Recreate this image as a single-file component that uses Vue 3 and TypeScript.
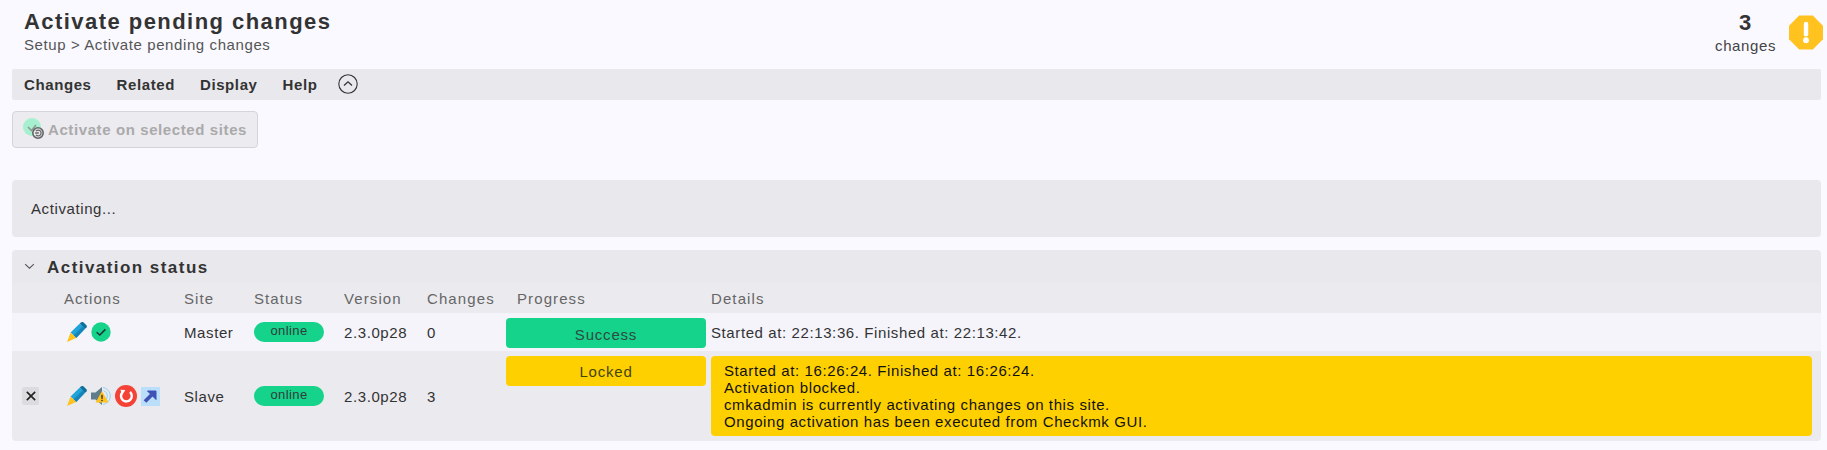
<script setup lang="ts">
interface SiteRow {
  name: string;
  version: string;
  changes: number;
  progress: string;
  kind: "ok" | "locked";
}

const menus = ["Changes", "Related", "Display", "Help"];
const headers = ["", "Actions", "Site", "Status", "Version", "Changes", "Progress", "Details"];

const sites: SiteRow[] = [
  { name: "Master", version: "2.3.0p28", changes: 0, progress: "Success", kind: "ok" },
  { name: "Slave", version: "2.3.0p28", changes: 3, progress: "Locked", kind: "locked" },
];

const lockedDetails = [
  "Started at: 16:26:24. Finished at: 16:26:24.",
  "Activation blocked.",
  "cmkadmin is currently activating changes on this site.",
  "Ongoing activation has been executed from Checkmk GUI.",
];
</script>

<template>
  <div class="page">
    <header class="top">
      <div>
        <h1>Activate pending changes</h1>
        <div class="crumb">Setup &gt; Activate pending changes</div>
      </div>
      <div class="pending">
        <div class="count">
          <b>3</b>
          <span>changes</span>
        </div>
        <svg class="octagon" viewBox="0 0 35 35" width="34" height="35">
          <polygon points="10.5,0 24.5,0 35,10.5 35,24.5 24.5,35 10.5,35 0,24.5 0,10.5" fill="#ffc21f" />
          <rect x="15.2" y="6.5" width="4.6" height="15" rx="2.3" fill="#fff" />
          <circle cx="17.5" cy="25.5" r="3" fill="#fff" />
        </svg>
      </div>
    </header>

    <nav class="menubar">
      <span v-for="m in menus" :key="m" class="menu">{{ m }}</span>
      <svg viewBox="0 0 20 20" width="20" height="20">
        <circle cx="10" cy="10" r="9.2" fill="none" stroke="#333" stroke-width="1.1" />
        <path d="M6 11.5 L10 7.8 L14 11.5" fill="none" stroke="#333" stroke-width="1.3" />
      </svg>
    </nav>

    <div class="actions">
      <button class="activate" disabled>
        <svg viewBox="0 0 24 24" width="24" height="24" class="btn-icon">
          <circle cx="9" cy="9" r="9" fill="#a6f0cf" />
          <path d="M5 9 L8.5 12.5 L13 7" fill="none" stroke="#8c9a94" stroke-width="1.6" />
          <circle cx="15" cy="15" r="5.2" fill="#e9e8ee" stroke="#666" stroke-width="1.6" />
          <path d="M13 13.1 A2.9 2.9 0 1 1 13 16.9" fill="none" stroke="#666" stroke-width="1.3" />
          <path d="M12.2 15 h3.6" stroke="#666" stroke-width="1.5" />
        </svg>
        Activate on selected sites
      </button>
    </div>

    <div class="message">Activating...</div>

    <section class="status">
      <div class="section-head">
        <svg viewBox="0 0 12 8" width="11" height="7">
          <path d="M1 1.2 L6 6 L11 1.2" fill="none" stroke="#555" stroke-width="1.2" />
        </svg>
        <h2>Activation status</h2>
      </div>
      <table>
        <thead>
          <tr>
            <th v-for="(h, i) in headers" :key="i">{{ h }}</th>
          </tr>
        </thead>
        <tbody>
          <tr v-for="site in sites" :key="site.name" :class="site.kind">
            <td class="cell-x">
              <span v-if="site.kind === 'locked'" class="x-box">
                <svg viewBox="0 0 12 12" width="10" height="10">
                  <path d="M1 1 L11 11 M11 1 L1 11" stroke="#222" stroke-width="2" />
                </svg>
              </span>
            </td>
            <td class="cell-actions">
              <div class="icons">
                <svg viewBox="0 0 20 20" width="20" height="20">
                  <path d="M3.6 10.6 L12.8 1.6 L18 6.8 L9.2 16 Z" fill="#1fa4da" />
                  <path d="M6.6 13.6 L15.6 4.4 L18 6.8 L9.2 16 Z" fill="#1585b8" />
                  <path d="M12.8 1.6 L14 0.5 a2 2 0 0 1 2.6 0 L19.4 3.3 a2 2 0 0 1 0 2.4 L18 6.8 Z" fill="#116f9b" />
                  <path d="M3.6 10.6 L9.2 16 L0 20 Z" fill="#ffc21f" />
                </svg>
                <template v-if="site.kind === 'ok'">
                  <svg viewBox="0 0 20 20" width="20" height="20">
                    <circle cx="10" cy="10" r="9.7" fill="#15d38a" />
                    <path d="M5.6 10.2 L8.8 13 L14.4 7.4" fill="none" stroke="#23323a" stroke-width="1.5" />
                  </svg>
                </template>
                <template v-else>
                  <svg viewBox="0 0 20 20" width="20" height="20">
                    <path d="M0 6.5 H4.5 L11 1 V19 L4.5 13.5 H0 Z" fill="#607d8b" />
                    <path d="M12 1.5 A8.6 8.6 0 0 1 12 18.5 M12.5 4.5 A5.8 5.8 0 0 1 12.5 15.5" fill="none" stroke="#90d2f4" stroke-width="1" />
                    <path d="M11 5 L17.5 16.5 H4.5 Z" fill="#ffc21f" />
                    <rect x="10.3" y="8.8" width="1.4" height="4" fill="#333" />
                    <rect x="10.3" y="13.8" width="1.4" height="1.4" fill="#333" />
                  </svg>
                  <svg viewBox="0 0 22 22" width="22" height="22">
                    <circle cx="11" cy="11" r="11" fill="#f44336" />
                    <path d="M7.4 7.4 A5.4 5.4 0 1 0 15 7" fill="none" stroke="#fff" stroke-width="2.4" />
                    <path d="M5.4 4.8 L10.4 5 L7.2 9.8 Z" fill="#fff" />
                  </svg>
                  <svg viewBox="0 0 19 19" width="19" height="19">
                    <rect width="19" height="19" fill="#bbdefb" />
                    <path d="M4 14.5 L11 7.5" stroke="#3f51b5" stroke-width="3.8" />
                    <path d="M6.5 4 H15 V12.5 Z" fill="#3f51b5" stroke="#3f51b5" stroke-width="1" />
                  </svg>
                </template>
              </div>
            </td>
            <td>{{ site.name }}</td>
            <td><span class="badge">online</span></td>
            <td>{{ site.version }}</td>
            <td>{{ site.changes }}</td>
            <td class="cell-progress">
              <div class="bar">{{ site.progress }}</div>
            </td>
            <td class="cell-details">
              <div v-if="site.kind === 'locked'" class="detail-box">
                <div v-for="line in lockedDetails" :key="line">{{ line }}</div>
              </div>
              <template v-else>Started at: 22:13:36. Finished at: 22:13:42.</template>
            </td>
          </tr>
        </tbody>
      </table>
    </section>
  </div>
</template>

<style>
html,
body {
  background: #faf9ff;
}
</style>

<style scoped>
.page {
  box-sizing: border-box;
  width: 1827px;
  height: 450px;
  overflow: hidden;
  padding: 0 6px 0 12px;
  font-family: "Liberation Sans", Arial, sans-serif;
  font-size: 15px;
  color: #333;
  letter-spacing: 0.6px;
}

.top {
  display: flex;
  justify-content: space-between;
  height: 69px;
  padding: 10px 0 0 12px;
  box-sizing: border-box;
}

h1 {
  margin: 0;
  font-size: 22px;
  line-height: 24px;
  font-weight: 700;
  letter-spacing: 1.45px;
  color: #333;
}

.crumb {
  margin-top: 2px;
  line-height: 17px;
  color: #555;
}

.pending {
  display: flex;
  align-items: flex-start;
  gap: 13px;
  margin-right: -2px;
  padding-top: 5px;
}

.count {
  display: flex;
  flex-direction: column;
  align-items: center;
  margin-top: -3px;
}

.count b {
  font-size: 22px;
  line-height: 22px;
  margin-bottom: 3px;
}

.count span {
  line-height: 18px;
  color: #444;
}

.menubar {
  display: flex;
  align-items: center;
  height: 31px;
  padding-left: 12px;
  background: #e9e8ed;
  border-radius: 2px;
}

.menu {
  margin-right: 25px;
  font-weight: 700;
  color: #333;
}

.menubar svg {
  margin-left: -4px;
  margin-top: -1px;
}

.actions {
  height: 80px;
  padding-top: 11px;
  box-sizing: border-box;
}

.activate {
  display: flex;
  align-items: center;
  width: 246px;
  height: 37px;
  padding: 0 0 0 10px;
  background: #ecebf0;
  border: 1px solid #d5d4da;
  border-radius: 4px;
  font: inherit;
  font-weight: 700;
  letter-spacing: 0.6px;
  color: #aaa;
  white-space: nowrap;
}

.btn-icon {
  margin-right: 1px;
  flex: none;
}

.message {
  box-sizing: border-box;
  height: 57px;
  padding-left: 19px;
  display: flex;
  align-items: center;
  background: #e9e8ed;
  border-radius: 4px;
  margin-bottom: 13px;
}

.status {
  border-radius: 4px;
  overflow: hidden;
}

.section-head {
  display: flex;
  align-items: center;
  gap: 12px;
  height: 33px;
  padding-left: 12px;
  background: #e9e8ed;
}

h2 {
  margin: 2px 0 0;
  font-size: 17px;
  font-weight: 700;
  letter-spacing: 1.45px;
  color: #333;
}

table {
  width: 100%;
  border-collapse: collapse;
  table-layout: fixed;
}

th {
  height: 30px;
  padding: 0;
  text-align: left;
  font-weight: 400;
  color: #666;
  letter-spacing: 1.1px;
  background: #ebeaef;
}

th:nth-child(1) {
  width: 52px;
}

th:nth-child(2) {
  width: 120px;
}

th:nth-child(3) {
  width: 70px;
}

th:nth-child(4) {
  width: 90px;
}

th:nth-child(5) {
  width: 83px;
}

th:nth-child(6) {
  width: 79px;
}

th:nth-child(7) {
  width: 205px;
  padding-left: 11px;
  box-sizing: border-box;
}

td {
  box-sizing: border-box;
  padding: 0;
  vertical-align: middle;
}

tr.ok td {
  height: 38px;
  background: #f5f4fb;
}

tr.locked td {
  height: 90px;
  background: #ebeaef;
}

.cell-x {
  padding-left: 10px;
}

.x-box {
  display: flex;
  align-items: center;
  justify-content: center;
  width: 17px;
  height: 18px;
  background: #dcdcdf;
  border-radius: 2px;
}

.icons {
  display: flex;
  align-items: center;
  gap: 4px;
  padding-left: 3px;
}

.icons svg {
  flex: none;
}

.badge {
  display: block;
  width: 70px;
  height: 20px;
  line-height: 17px;
  text-align: center;
  background: #15d38a;
  border-radius: 10px;
  font-size: 13px;
  letter-spacing: 0.4px;
  color: #2f3b3c;
}

.bar {
  box-sizing: border-box;
  width: 200px;
  height: 30px;
  line-height: 34px;
  text-align: center;
  border-radius: 4px;
  color: #2f4a44;
  letter-spacing: 0.8px;
}

tr.ok .bar {
  background: #15d38a;
}

tr.locked .bar {
  line-height: 32px;
  background: #ffd000;
  color: #444410;
}

td.cell-progress {
  vertical-align: top;
  padding-top: 5px;
}

.cell-details {
  white-space: nowrap;
  color: #333;
}

.detail-box {
  box-sizing: border-box;
  width: 1101px;
  height: 80px;
  padding: 6px 13px;
  line-height: 17px;
  background: #ffd000;
  border-radius: 4px;
  color: #111;
}
</style>
